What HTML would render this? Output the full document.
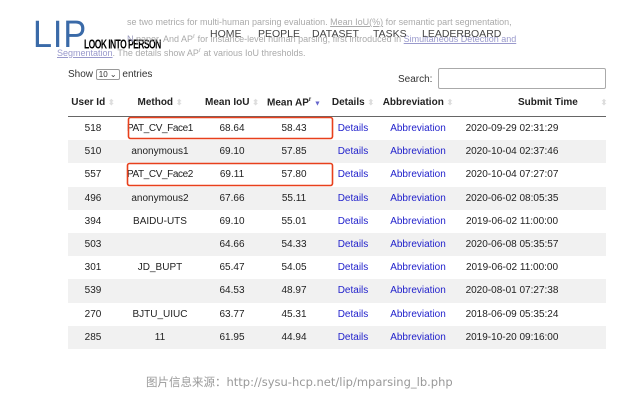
<!DOCTYPE html>
<html><head><meta charset="utf-8"><style>
body{margin:0;width:625px;height:406px;background:#fff;position:relative;overflow:hidden;font-family:"Liberation Sans",Arial,sans-serif;}
.a{position:absolute;white-space:nowrap}
.g{color:#aaa;font-size:9px}
table{position:absolute;left:68px;top:89px;width:538px;border-collapse:collapse;font-size:10px;color:#222;table-layout:fixed}
th{height:27px;font-weight:bold;border-bottom:1px solid #666;font-size:10px;padding:0;white-space:nowrap;overflow:visible}
td{height:23.2px;padding:0;text-align:center;white-space:nowrap}
tr.s td{background:#f1f1f1}
.l{color:#2222cc}
.ar{color:#ddd;font-size:8px}
.d{padding-right:38px}
.p{letter-spacing:-0.4px}
</style></head><body>
<div class="a" style="left:33px;top:14px;font-size:38px;color:#3a6aa8;transform:scaleX(.9);transform-origin:left;letter-spacing:1px">LIP</div>
<div class="a" style="left:84px;top:39px;font-size:9px;font-weight:bold;color:#000;letter-spacing:-.6px;transform:scale(.95,1.45);transform-origin:left">LOOK INTO PERSON</div>
<div class="a g" style="left:127px;top:17px">se two metrics for multi-human parsing evaluation. <u>Mean IoU(%)</u> for semantic part segmentation,</div>
<div class="a g" style="left:127px;top:34px"><span style="color:#99b">N</span> paper. And AP<sup style="font-size:6px">r</sup> for instance-level human parsing, first introduced in <u style="color:#99c">Simultaneous Detection and</u></div>
<div class="a g" style="left:57px;top:48px"><u style="color:#99c">Segmentation</u>. The details show AP<sup style="font-size:6px">r</sup> at various IoU thresholds.</div>
<div class="a" style="left:210px;top:28px;font-size:10.5px;color:#444">HOME</div>
<div class="a" style="left:258px;top:28px;font-size:10.5px;color:#444">PEOPLE</div>
<div class="a" style="left:312px;top:28px;font-size:10.5px;color:#444">DATASET</div>
<div class="a" style="left:373px;top:28px;font-size:10.5px;color:#444">TASKS</div>
<div class="a" style="left:422px;top:28px;font-size:10.5px;color:#444">LEADERBOARD</div>
<div class="a" style="left:68px;top:69px;font-size:10px;color:#333">Show <span style="border:1px solid #999;border-radius:2px;font-size:8px;padding:0 2px">10 ⌄</span> entries</div>
<div class="a" style="left:398px;top:74px;font-size:10px;color:#333">Search:</div>
<div class="a" style="left:438px;top:68px;width:166px;height:19px;border:1px solid #aaa;border-radius:2px"></div>
<table>
<colgroup><col style="width:50px"><col style="width:84px"><col style="width:60px"><col style="width:64px"><col style="width:54px"><col style="width:76px"><col style="width:150px"></colgroup>
<tr><th>User Id <span class="ar">⬍</span></th><th>Method <span class="ar">⬍</span></th><th>Mean IoU <span class="ar">⬍</span></th><th>Mean AP<sup style="font-size:6px">r</sup> <span style="color:#66c;font-size:7px">▼</span></th><th>Details <span class="ar">⬍</span></th><th>Abbreviation <span class="ar">⬍</span></th><th style="text-align:left;padding-left:62px">Submit Time <span class="ar" style="margin-left:20px">⬍</span></th></tr>
<tr><td>518</td><td class="p">PAT_CV_Face1</td><td>68.64</td><td>58.43</td><td class="l">Details</td><td class="l">Abbreviation</td><td class="d">2020-09-29 02:31:29</td></tr>
<tr class="s"><td>510</td><td>anonymous1</td><td>69.10</td><td>57.85</td><td class="l">Details</td><td class="l">Abbreviation</td><td class="d">2020-10-04 02:37:46</td></tr>
<tr><td>557</td><td class="p">PAT_CV_Face2</td><td>69.11</td><td>57.80</td><td class="l">Details</td><td class="l">Abbreviation</td><td class="d">2020-10-04 07:27:07</td></tr>
<tr class="s"><td>496</td><td>anonymous2</td><td>67.66</td><td>55.11</td><td class="l">Details</td><td class="l">Abbreviation</td><td class="d">2020-06-02 08:05:35</td></tr>
<tr><td>394</td><td>BAIDU-UTS</td><td>69.10</td><td>55.01</td><td class="l">Details</td><td class="l">Abbreviation</td><td class="d">2019-06-02 11:00:00</td></tr>
<tr class="s"><td>503</td><td></td><td>64.66</td><td>54.33</td><td class="l">Details</td><td class="l">Abbreviation</td><td class="d">2020-06-08 05:35:57</td></tr>
<tr><td>301</td><td>JD_BUPT</td><td>65.47</td><td>54.05</td><td class="l">Details</td><td class="l">Abbreviation</td><td class="d">2019-06-02 11:00:00</td></tr>
<tr class="s"><td>539</td><td></td><td>64.53</td><td>48.97</td><td class="l">Details</td><td class="l">Abbreviation</td><td class="d">2020-08-01 07:27:38</td></tr>
<tr><td>270</td><td>BJTU_UIUC</td><td>63.77</td><td>45.31</td><td class="l">Details</td><td class="l">Abbreviation</td><td class="d">2018-06-09 05:35:24</td></tr>
<tr class="s"><td>285</td><td>11</td><td>61.95</td><td>44.94</td><td class="l">Details</td><td class="l">Abbreviation</td><td class="d">2019-10-20 09:16:00</td></tr>
</table>
<svg class="a" style="left:0;top:0" width="625" height="406"><rect x="128.5" y="117.5" width="204" height="21" rx="2" fill="none" stroke="#e8401c" stroke-width="1.6"/><rect x="127.5" y="163.5" width="205" height="22" rx="2" fill="none" stroke="#e8401c" stroke-width="1.6"/></svg>
<div class="a" style="left:146px;top:374px;font-size:11.5px;color:#999;font-family:'DejaVu Sans','Noto Sans CJK SC',sans-serif">图片信息来源：http://sysu-hcp.net/lip/mparsing_lb.php</div>
</body></html>
